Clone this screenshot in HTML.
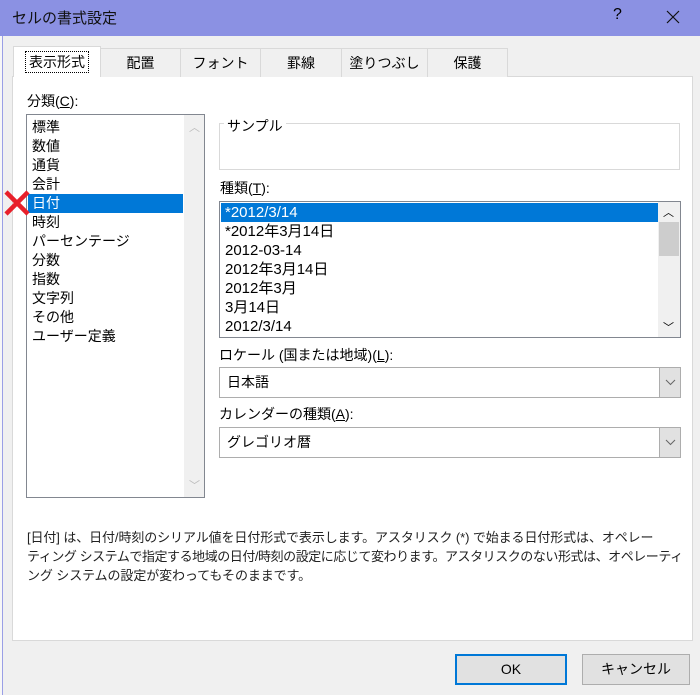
<!DOCTYPE html>
<html><head><meta charset="utf-8"><style>
*{box-sizing:border-box;margin:0;padding:0}
body{width:700px;height:695px;overflow:hidden;background:#f0f0f0;font-family:"Liberation Sans","Noto Sans CJK JP",sans-serif;font-size:14px;color:#000;position:relative}
.a{position:absolute}
.title{left:0;top:0;width:700px;height:36px;background:#8b91e3}
.tab{position:absolute;top:48px;height:29px;border:1px solid #d9d9d9;border-bottom:none;background:#f0f0f0;text-align:center;line-height:28px;font-size:14px}
.panel{left:12px;top:76px;width:681px;height:565px;background:#fff;border:1px solid #d9d9d9}
.list div{height:19px;line-height:19px;padding-left:4px;white-space:nowrap}
.sel{background:#0078d7;color:#fff}
.sb{background:#f0f0f0}
.combo{border:1px solid #adadad;background:#fff;height:31px;line-height:29px;padding-left:7px}
.combo .dd{position:absolute;right:0;top:0;width:21px;height:29px;background:#e1e1e1;border-left:1px solid #adadad}
.btn{top:654px;height:31px;background:#e1e1e1;border:1px solid #adadad;text-align:center;line-height:29px}
</style></head><body>
<div class="a" style="left:0;top:36px;width:3px;height:659px;background:#f7f7f7;border-right:1px solid #9a9fe6"></div>
<div class="a title"></div>
<div class="a" style="left:12px;top:7px;font-size:15px;color:#111">セルの書式設定</div>
<div class="a" style="left:613px;top:6px;font-size:16px">?</div>
<svg class="a" style="left:666px;top:10px" width="14" height="14"><path d="M1 1L13 13M13 1L1 13" stroke="#111" stroke-width="1.2"/></svg>
<div class="a panel"></div>
<div class="tab" style="left:100px;width:81px">配置</div>
<div class="tab" style="left:180px;width:81px">フォント</div>
<div class="tab" style="left:260px;width:82px">罫線</div>
<div class="tab" style="left:341px;width:87px">塗りつぶし</div>
<div class="tab" style="left:427px;width:81px">保護</div>
<div class="tab" style="left:13px;top:46px;width:88px;height:31px;background:#fff;line-height:30px"><span style="border:1px dotted #000;padding:2px 3px">表示形式</span></div>
<div class="a" style="left:27px;top:91px">分類(<u>C</u>):</div>
<div class="a" style="left:26px;top:114px;width:179px;height:384px;border:1px solid #828790;background:#fff">
 <div class="a sb" style="left:157px;top:0;width:20px;height:382px"></div>
 <div class="a" style="left:162px;top:4px;color:#bbb;font-size:11px">︿</div>
 <div class="a" style="left:162px;top:362px;color:#bbb;font-size:11px">﹀</div>
 <div class="a list" style="left:1px;top:3px;width:155px">
  <div>標準</div><div>数値</div><div>通貨</div><div>会計</div><div class="sel">日付</div><div>時刻</div><div>パーセンテージ</div><div>分数</div><div>指数</div><div>文字列</div><div>その他</div><div>ユーザー定義</div>
 </div>
</div>
<svg class="a" style="left:3px;top:189px" width="28" height="28"><path d="M3 3L25 25M25 3L3 25" stroke="#e8202a" stroke-width="4.5"/></svg>
<div class="a" style="left:219px;top:123px;width:461px;height:47px;border:1px solid #d9d9d9"></div>
<div class="a" style="left:224px;top:116px;background:#fff;padding:0 3px">サンプル</div>
<div class="a" style="left:220px;top:178px">種類(<u>T</u>):</div>
<div class="a" style="left:219px;top:201px;width:462px;height:137px;border:1px solid #828790;background:#fff">
 <div class="a sb" style="left:438px;top:0;width:22px;height:135px"></div>
 <div class="a" style="left:439px;top:20px;width:20px;height:34px;background:#cdcdcd"></div>
 <div class="a" style="left:443px;top:2px;font-size:11px">︿</div>
 <div class="a" style="left:443px;top:117px;font-size:11px">﹀</div>
 <div class="a list" style="left:1px;top:1px;width:437px;font-size:15px">
  <div class="sel">*2012/3/14</div><div>*2012年3月14日</div><div>2012-03-14</div><div>2012年3月14日</div><div>2012年3月</div><div>3月14日</div><div>2012/3/14</div>
 </div>
</div>
<div class="a" style="left:219px;top:345px">ロケール (国または地域)(<u>L</u>):</div>
<div class="a combo" style="left:219px;top:367px;width:462px">日本語<div class="dd"><svg width="21" height="29"><path d="M6 12L10.5 16.5L15 12" stroke="#666" fill="none"/></svg></div></div>
<div class="a" style="left:219px;top:404px">カレンダーの種類(<u>A</u>):</div>
<div class="a combo" style="left:219px;top:427px;width:462px">グレゴリオ暦<div class="dd"><svg width="21" height="29"><path d="M6 12L10.5 16.5L15 12" stroke="#666" fill="none"/></svg></div></div>
<div class="a" style="left:27px;top:528px;width:660px;line-height:19px;font-size:13px;color:#222;white-space:nowrap;letter-spacing:-0.1px">[日付] は、日付/時刻のシリアル値を日付形式で表示します。アスタリスク (*) で始まる日付形式は、オペレー<br><span style="letter-spacing:-0.45px">ティング システムで指定する地域の日付/時刻の設定に応じて変わります。アスタリスクのない形式は、オペレーティ</span><br>ング システムの設定が変わってもそのままです。</div>
<div class="a btn" style="left:455px;width:112px;border:2px solid #0078d7;line-height:27px">OK</div>
<div class="a btn" style="left:582px;width:108px">キャンセル</div>
</body></html>
